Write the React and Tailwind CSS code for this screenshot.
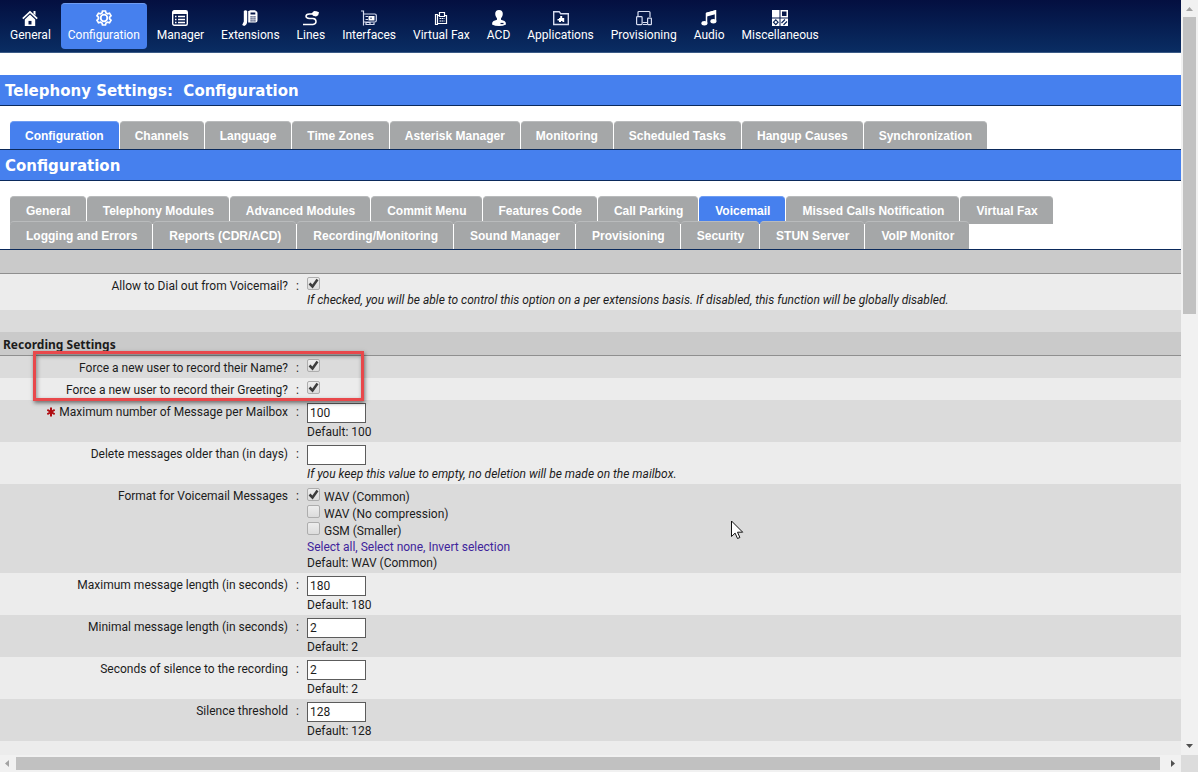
import { useState } from 'react';

const NAV = [
  { label: 'General', icon: HouseIcon },
  { label: 'Configuration', icon: GearIcon, active: true },
  { label: 'Manager', icon: ListIcon },
  { label: 'Extensions', icon: PhoneIcon },
  { label: 'Lines', icon: CableIcon },
  { label: 'Interfaces', icon: CardIcon },
  { label: 'Virtual Fax', icon: FaxIcon },
  { label: 'ACD', icon: AgentIcon },
  { label: 'Applications', icon: FolderIcon },
  { label: 'Provisioning', icon: DevicesIcon },
  { label: 'Audio', icon: NoteIcon },
  { label: 'Miscellaneous', icon: TilesIcon },
];

const TABS = [
  'Configuration',
  'Channels',
  'Language',
  'Time Zones',
  'Asterisk Manager',
  'Monitoring',
  'Scheduled Tasks',
  'Hangup Causes',
  'Synchronization',
];

const SUB_TABS = [
  [
    'General',
    'Telephony Modules',
    'Advanced Modules',
    'Commit Menu',
    'Features Code',
    'Call Parking',
    'Voicemail',
    'Missed Calls Notification',
    'Virtual Fax',
  ],
  [
    'Logging and Errors',
    'Reports (CDR/ACD)',
    'Recording/Monitoring',
    'Sound Manager',
    'Provisioning',
    'Security',
    'STUN Server',
    'VoIP Monitor',
  ],
];

const FORMATS = ['WAV (Common)', 'WAV (No compression)', 'GSM (Smaller)'];

export default function App() {
  return (
    <div className="flex h-screen flex-col overflow-hidden bg-[#f1f1f1] font-['Roboto',sans-serif] text-xs leading-4 text-[#1c1c1c]">
      <div className="flex min-h-0 flex-1">
        <main className="relative min-w-0 flex-1 overflow-hidden bg-white">
          <MainNav />
          <TitleBar className="mt-[22px]">Telephony Settings:&nbsp; Configuration</TitleBar>
          <div className="mt-[15px] flex pl-2.5">
            {TABS.map((tab) => (
              <Tab key={tab} label={tab} active={tab === 'Configuration'} className="px-[15px]" />
            ))}
          </div>
          <TitleBar className="border-t">Configuration</TitleBar>
          <div className="mt-[15px] border-b border-[#0b2a5c] pl-2.5">
            <div className="flex">
              {SUB_TABS[0].map((tab) => (
                <Tab key={tab} label={tab} active={tab === 'Voicemail'} className="pr-[15px] pl-4" />
              ))}
            </div>
            <div className="-mt-[3px] flex">
              {SUB_TABS[1].map((tab) => (
                <Tab key={tab} label={tab} className="pr-[15px] pl-4" />
              ))}
            </div>
          </div>
          <VoicemailForm />
          <Pointer />
        </main>
        <VerticalScroll />
      </div>
      <HorizontalScroll />
    </div>
  );
}

function MainNav() {
  return (
    <nav className="flex h-[53px] items-start gap-[3px] border-b border-[#3a5a86] bg-linear-to-b from-[#040f40] to-[#0a2d63] pt-[3px] pl-[3px]">
      {NAV.map(({ label, icon: Icon, active }) => (
        <a
          key={label}
          href="#"
          className={`flex h-[46px] flex-col items-center rounded px-[7px] pt-1.5 whitespace-nowrap text-white ${
            active ? 'border-t border-[#6f9df3] bg-[#4680ee]' : 'border-t border-transparent'
          }`}
        >
          <Icon />
          <span>{label}</span>
        </a>
      ))}
    </nav>
  );
}

function TitleBar({ className, children }) {
  return (
    <h1
      className={`border-b border-[#0b2a5c] bg-[#4680ee] pt-0.5 pl-[5px] font-['DejaVu_Sans',sans-serif] text-[15px] leading-7 font-bold text-white ${className}`}
    >
      {children}
    </h1>
  );
}

function Tab({ label, active, className }) {
  return (
    <a
      href="#"
      className={`mr-px h-7 rounded-t border-t pt-1.5 font-['Liberation_Sans',sans-serif] font-bold whitespace-nowrap text-white ${
        active ? 'border-[#6f9df3] bg-[#4680ee]' : 'border-[#b9bbbc] bg-[#a5a7a8]'
      } ${className}`}
    >
      {label}
    </a>
  );
}

function VoicemailForm() {
  return (
    <form>
      <div className="h-6 border-b border-[#8f8f8f] bg-[#cacaca]" />
      <Row id="dialout" label="Allow to Dial out from Voicemail?" tone="bg-[#ececec]">
        <div className="h-4 pt-px">
          <Check id="dialout" defaultChecked />
        </div>
        <p className="italic">
          If checked, you will be able to control this option on a per extensions basis. If disabled, this function
          will be globally disabled.
        </p>
      </Row>
      <div className="h-[22px] bg-[#dbdbdb]" />
      <h2 className="h-6 border-b border-[#8f8f8f] bg-[#cacaca] pt-[5px] pl-[3px] font-['Noto_Sans',sans-serif] font-bold">
        Recording Settings
      </h2>
      <div className="relative">
        <Row id="name" label="Force a new user to record their Name?" tone="bg-[#dbdbdb]">
          <div className="h-4 pt-px">
            <Check id="name" defaultChecked />
          </div>
        </Row>
        <Row id="greeting" label="Force a new user to record their Greeting?" tone="bg-[#ececec]">
          <div className="h-4 pt-px">
            <Check id="greeting" defaultChecked />
          </div>
        </Row>
        <div className="pointer-events-none absolute -top-[5px] -bottom-px left-[33px] w-[331px] border-3 border-[#e8484b] shadow-[1px_2px_4px_rgba(0,0,0,0.5),inset_1px_2px_4px_rgba(0,0,0,0.4)]" />
      </div>
      <TextRow id="max-messages" label="Maximum number of Message per Mailbox" value="100" required tone="bg-[#dbdbdb]">
        Default: 100
      </TextRow>
      <TextRow id="delete-days" label="Delete messages older than (in days)" value="" tone="bg-[#ececec]">
        <i>If you keep this value to empty, no deletion will be made on the mailbox.</i>
      </TextRow>
      <FormatRow />
      <TextRow id="max-length" label="Maximum message length (in seconds)" value="180" tone="bg-[#ececec]">
        Default: 180
      </TextRow>
      <TextRow id="min-length" label="Minimal message length (in seconds)" value="2" tone="bg-[#dbdbdb]">
        Default: 2
      </TextRow>
      <TextRow id="silence" label="Seconds of silence to the recording" value="2" tone="bg-[#ececec]">
        Default: 2
      </TextRow>
      <TextRow id="threshold" label="Silence threshold" value="128" tone="bg-[#dbdbdb]">
        Default: 128
      </TextRow>
      <div className="h-10 bg-[#ececec]" />
    </form>
  );
}

function Row({ id, label, required, tone, children }) {
  return (
    <div className={`grid grid-cols-[288px_19px_1fr] ${tone}`}>
      <label htmlFor={id} className="pt-1 pb-0.5 text-right whitespace-nowrap">
        {required && <Asterisk />}
        {label}
      </label>
      <span className="pt-1 text-center">:</span>
      <div className="py-0.5">{children}</div>
    </div>
  );
}

function TextRow({ id, value, children, ...row }) {
  return (
    <Row id={id} {...row}>
      <input
        id={id}
        type="text"
        defaultValue={value}
        className="mt-px block h-5 w-[59px] border border-[#5c5c5c] bg-white px-0.5 text-xs leading-4"
      />
      <p className="mt-px">{children}</p>
    </Row>
  );
}

function FormatRow() {
  const [picked, setPicked] = useState([true, false, false]);
  const links = [
    ['Select all', () => setPicked([true, true, true])],
    ['Select none', () => setPicked([false, false, false])],
    ['Invert selection', () => setPicked(picked.map((p) => !p))],
  ];

  return (
    <Row id="format-0" label="Format for Voicemail Messages" tone="bg-[#dbdbdb]">
      <div className="mt-0.5">
        {FORMATS.map((format, i) => (
          <div key={format} className="flex h-[17px] items-start gap-1">
            <Check
              id={`format-${i}`}
              checked={picked[i]}
              onChange={() => setPicked(picked.map((p, j) => (j === i ? !p : p)))}
            />
            <label htmlFor={`format-${i}`} className="pt-px">
              {format}
            </label>
          </div>
        ))}
      </div>
      <p className="text-[#40249b]">
        {links.map(([text, run], i) => (
          <span key={text}>
            {i > 0 && ', '}
            <a href="#" onClick={run}>
              {text}
            </a>
          </span>
        ))}
      </p>
      <p>Default: WAV (Common)</p>
    </Row>
  );
}

function Check(props) {
  return (
    <span className="grid size-[13px]">
      <input
        type="checkbox"
        className="peer col-start-1 row-start-1 size-[13px] appearance-none rounded-xs border border-[#adadad] bg-linear-to-b from-[#ededed] to-[#dcdcdc]"
        {...props}
      />
      <svg
        viewBox="0 0 13 13"
        className="pointer-events-none invisible col-start-1 row-start-1 size-[13px] peer-checked:visible"
        fill="none"
        aria-hidden
      >
        <path d="M2.500 6.500l3 3L10.500 2.500" stroke="#3c3c3c" strokeWidth="2.500" />
      </svg>
    </span>
  );
}

function Asterisk() {
  return (
    <svg width="8" height="10" viewBox="0 0 8 10" className="mr-1 inline-block align-[-1px]" aria-label="required">
      <path d="M4 .5v9M.3 2.800l7.400 4.400M7.700 2.800L.3 7.200" stroke="#b00d12" strokeWidth="2" />
    </svg>
  );
}

function VerticalScroll() {
  return (
    <div className="flex w-[17px] flex-none flex-col items-center bg-[#f1f1f1]" aria-hidden>
      <svg width="17" height="17" viewBox="0 0 17 17" className="flex-none">
        <path d="M5 11h7L8.5 7z" fill="#a3a3a3" />
      </svg>
      <div className="h-[297px] w-[13px] bg-[#c1c1c1]" />
      <svg width="17" height="17" viewBox="0 0 17 17" className="mt-auto flex-none">
        <path d="M5 6h7l-3.5 4z" fill="#505050" />
      </svg>
    </div>
  );
}

function HorizontalScroll() {
  return (
    <div className="flex h-[17px] flex-none items-center" aria-hidden>
      <svg width="16" height="17" viewBox="0 0 16 17" className="flex-none">
        <path d="M9 5v7L5 8.500z" fill="#a3a3a3" />
      </svg>
      <div className="h-[13px] flex-1 bg-[#c1c1c1]" />
      <svg width="21" height="17" viewBox="0 0 21 17" className="flex-none">
        <path d="M11 5v7l4-3.500z" fill="#505050" />
      </svg>
      <div className="h-full w-[17px] bg-[#dcdcdc]" />
    </div>
  );
}

function Pointer() {
  return (
    <svg width="13" height="20" viewBox="0 0 13 20" className="absolute top-[520px] left-[731px]" aria-hidden>
      <path d="M.5 1v15.500l3.600-3.400 2.400 5.400 2.400-1-2.400-5.300h5.200z" fill="#fff" stroke="#111" strokeWidth="1" />
    </svg>
  );
}

function Glyph({ children }) {
  return (
    <svg
      width="16"
      height="16"
      viewBox="0 0 16 16"
      fill="none"
      stroke="#fff"
      strokeWidth="1.2"
      className="mb-px flex-none"
      aria-hidden
    >
      {children}
    </svg>
  );
}

function HouseIcon() {
  return (
    <Glyph>
      <path d="M.8 8.600L8 1.800l7.200 6.800" strokeWidth="1.700" />
      <path d="M11.500 1h2v4.500l-2-2z" fill="#fff" stroke="none" />
      <path d="M8 4.500l5.200 5V16H2.800V9.500z" fill="#fff" stroke="none" />
      <path d="M6.500 14.500v-3.600h3v3.600z" fill="#07184a" stroke="none" />
    </Glyph>
  );
}

function GearIcon() {
  return (
    <Glyph>
      <path
        d="M6.500 1h3l.5 2 1.500.8 2-.6 1.500 2.600-1.400 1.400v1.600l1.400 1.400-1.500 2.600-2-.6-1.500.8-.5 2h-3l-.5-2-1.500-.8-2 .6L1 10.200l1.400-1.400V7.200L1 5.800l1.500-2.600 2 .6L6 3z"
        strokeWidth="1.700"
      />
      <circle cx="8" cy="8" r="3.300" strokeWidth="1.800" />
    </Glyph>
  );
}

function ListIcon() {
  return (
    <Glyph>
      <rect x=".7" y=".7" width="14.600" height="14.600" rx="1.500" strokeWidth="1.400" />
      <path d="M1 2.500h14" strokeWidth="3" />
      <path d="M3 6.500h1.500M6 6.500h7M3 9.500h1.500M6 9.500h7M3 12.500h1.500M6 12.500h7" strokeWidth="1.300" />
    </Glyph>
  );
}

function PhoneIcon() {
  return (
    <Glyph>
      <path d="M1.800 1Q3.500-.5 5.200 1v9.500q0 4.500-3 5.500L.2 15l1.600-3.500z" fill="#fff" stroke="none" />
      <path d="M6.200 1h1.300V.3h6V1q2 0 2 2v7.500q0 2-2 2H6.200z" fill="#fff" stroke="none" />
      <path d="M8.500 2.500h4.800v2H8.500z" fill="#07184a" stroke="none" />
      <path d="M8.500 6.800h5M8.500 8.800h5M8.500 10.800h5" stroke="#07184a" strokeDasharray="1.200 .7" />
    </Glyph>
  );
}

function CableIcon() {
  return (
    <Glyph>
      <path d="M9.500 4H6.500Q3 4.200 3 6.200T6.500 8.500h3.500q3 .3 3 3t-3 3H0" strokeWidth="1.500" />
      <path d="M8.500 3.500L11 1l2.500.3 2.500 1-.8 3-2.200 1.200-3-.8z" fill="#fff" stroke="none" />
    </Glyph>
  );
}

function CardIcon() {
  return (
    <Glyph>
      <path d="M0 1h2.500v14.500M2.500 4h11.300q1.500 0 1.500 1.500v5q0 1.500-1.500 1.500H2.500" stroke="#d6dcf0" />
      <path d="M4.500 6.500h2.500M4.500 9.500h2.500M5 14.500v-2h4v2zM9 14.500h4v-2" stroke="#d6dcf0" />
      <path d="M7.500 6h6v4.500h-6z" fill="#fff" stroke="none" />
      <path d="M9.500 7.500h1v1.500h-1z" fill="#07184a" stroke="none" />
    </Glyph>
  );
}

function FaxIcon() {
  return (
    <Glyph>
      <path d="M2.500 4.500h2v10h-2zM4.500 5.500h2M11.500 5.500h2v8h-9M6.500 2.500h5v4h-5z" />
      <path d="M6.500 8.500h5M6.500 11h5" strokeDasharray="1.500 .5" />
    </Glyph>
  );
}

function AgentIcon() {
  return (
    <Glyph>
      <path
        d="M8 0q3.800 0 3.800 4 0 2.500-1.800 4.500v1.200l3.500 1.400q1.500.8 1.500 3.400Q12 16 8 16t-7-1.500q0-2.600 1.500-3.400L6 9.700V8.500Q4.200 6.500 4.200 4 4.200 0 8 0z"
        fill="#fff"
        stroke="none"
      />
      <path d="M9.500 13.500h3" stroke="#07184a" />
    </Glyph>
  );
}

function FolderIcon() {
  return (
    <Glyph>
      <path d="M.7 14.500V1.700h5.500l1.500 2h7.600v10.800z" stroke="#d6dcf0" strokeWidth="1.400" />
      <path d="M6 8h1.200V6h2v2h2v4H9.500v-1H8v1H6v-1.500H4.500V9H6z" fill="#fff" stroke="none" />
    </Glyph>
  );
}

function DevicesIcon() {
  return (
    <Glyph>
      <path d="M2 6V2.500q0-1 1-1h10q1 0 1 1V7M6.500 12.500h5M7 14.500h4" stroke="#d6dcf0" />
      <rect x=".6" y="6.600" width="5.500" height="8" rx=".8" stroke="#d6dcf0" />
      <rect x="11.600" y="8.100" width="3.800" height="6.500" rx=".6" stroke="#d6dcf0" />
    </Glyph>
  );
}

function NoteIcon() {
  return (
    <Glyph>
      <path d="M5.500 13V3.500L14.500 1v10" strokeWidth="1.500" />
      <path d="M5 2.800L15 0v4L5 6.800z" fill="#fff" stroke="none" />
      <ellipse cx="3.400" cy="13.300" rx="3" ry="2.200" fill="#fff" stroke="none" />
      <ellipse cx="12.400" cy="11.300" rx="3" ry="2.200" fill="#fff" stroke="none" />
    </Glyph>
  );
}

function TilesIcon() {
  return (
    <Glyph>
      <path d="M0 0h7.500v7.500H0zM8.500 0H16v7.500H8.500zM0 8.500h7.500V16H0zM8.500 8.500H16V16H8.500z" fill="#fff" stroke="none" />
      <path d="M10 1.500h4.500v4.500H10z" fill="#07184a" stroke="none" />
      <path d="M3.800 9.800l2.300 2.400-2.300 2.400-2.300-2.400z" stroke="#0a2457" />
      <path d="M9.500 13l3.500-3.500M11.500 15l3.500-3.500" stroke="#0a2457" />
    </Glyph>
  );
}
